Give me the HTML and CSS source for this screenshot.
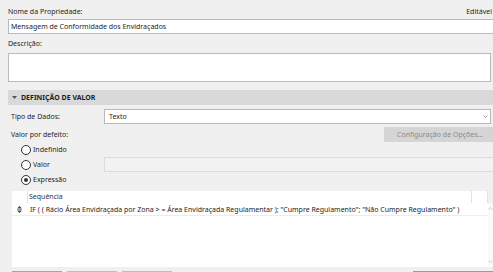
FILE: index.html
```html
<!DOCTYPE html>
<html lang="pt">
<head>
    <meta charset="UTF-8">
    <meta name="viewport" content="width=device-width, initial-scale=1.0">
    <title>Propriedade</title>
    <link rel="stylesheet" href="styles.css">
</head>
<body>
    <div class="panel">
        <div class="top-row">
            <span>Nome da Propriedade:</span>
            <span class="editable">Editável</span>
        </div>
        <div class="field name-field">Mensagem de Conformidade dos Envidraçados</div>
        <div class="desc-label">Descrição:</div>
        <div class="field desc-field"></div>

        <div class="section-bar">
            <svg class="caret" width="5" height="3" viewBox="0 0 5 3"><path d="M0 0H5L2.5 3Z" fill="#555"/></svg>
            DEFINIÇÃO DE VALOR
        </div>

        <div class="row type-row">
            <span class="row-label">Tipo de Dados:</span>
            <div class="field select">
                <span>Texto</span>
                <svg class="chevron" width="5" height="3" viewBox="0 0 5 3"><path d="M0.5 0.5L2.5 2.5L4.5 0.5" stroke="#999" fill="none"/></svg>
            </div>
        </div>
        <div class="row default-row">
            <span class="row-label">Valor por defeito:</span>
            <div class="options-btn">Configuração de Opções...</div>
        </div>

        <div class="radios">
            <div class="radio-row"><span class="radio-label"><span class="radio"></span>Indefinido</span></div>
            <div class="radio-row"><span class="radio-label"><span class="radio"></span>Valor</span><div class="value-field"></div></div>
            <div class="radio-row"><span class="radio-label"><span class="radio checked"></span>Expressão</span></div>
        </div>

        <div class="sequence">
            <div class="seq-head">
                <span class="handle-col"></span>
                <span class="seq-title">Sequência</span>
                <span class="head-cell"></span>
            </div>
            <div class="seq-body">
                <div class="seq-rows">
                    <div class="seq-row">
                        <span class="handle">
                            <svg width="5" height="7" viewBox="0 0 5 7"><path d="M2.5 0L5 2.5H0Z M0 3.2H5V3.8H0Z M0 4.5H5L2.5 7Z" fill="#444"/></svg>
                        </span>
                        <span class="expr">IF ( ( Rácio Área Envidraçada por Zona &gt; = Área Envidraçada Regulamentar ); "Cumpre Regulamento"; "Não Cumpre Regulamento" )</span>
                    </div>
                </div>
                <div class="scrollbar">
                    <svg width="5" height="3" viewBox="0 0 5 3"><path d="M0.5 2.5L2.5 0.5L4.5 2.5" stroke="#c8c8c8" fill="none"/></svg>
                    <svg width="5" height="3" viewBox="0 0 5 3"><path d="M0.5 0.5L2.5 2.5L4.5 0.5" stroke="#c8c8c8" fill="none"/></svg>
                </div>
            </div>
        </div>

        <div class="footer-buttons">
            <span class="foot-btn first"></span>
            <span class="foot-btn"></span>
            <span class="foot-btn"></span>
            <span class="foot-btn last"></span>
        </div>
    </div>
</body>
</html>
```

FILE: styles.css
```css
body {
    margin: 0;
    width: 493px;
    height: 272px;
    overflow: hidden;
    background-color: #f0f0f0;
    color: #1e1e1e;
    font-family: "Noto Sans", sans-serif;
    font-size: 7px;
}
.panel {
    padding: 6px 0 0 8px;
}
.top-row {
    display: flex;
    height: 12px;
    line-height: 12px;
    white-space: nowrap;
}
.editable {
    margin-left: auto;
    margin-right: 1px;
}
.field {
    background-color: #fff;
    border: 1px solid #b9b9b9;
    box-sizing: border-box;
}
.name-field {
    margin-top: 1px;
    height: 15px;
    line-height: 13px;
    padding-left: 2px;
    border-right: none;
}
.desc-label {
    margin-top: 4px;
    line-height: 12px;
}
.desc-field {
    margin-top: 3px;
    margin-right: 2px;
    height: 29px;
}
.section-bar {
    margin-top: 8px;
    height: 15px;
    display: flex;
    align-items: center;
    padding-left: 4px;
    background-color: #d9d9d9;
    font-weight: bold;
}
.caret {
    margin-right: 4px;
}
.row {
    display: flex;
    align-items: center;
    padding-left: 3px;
}
.row-label {
    width: 93px;
    flex-shrink: 0;
}
.type-row {
    margin-top: 4px;
}
.select {
    flex: 1;
    height: 15px;
    margin-right: 2px;
    display: flex;
    align-items: center;
    justify-content: space-between;
    padding: 0 2px 0 4px;
}
.default-row {
    margin-top: 3px;
}
.options-btn {
    margin-left: auto;
    margin-right: -6px;
    width: 115px;
    height: 15px;
    line-height: 15px;
    padding-left: 13px;
    box-sizing: border-box;
    background-color: #d5d5d5;
    color: #8a8a8a;
    white-space: nowrap;
}
.radio-row {
    display: grid;
    grid-template-columns: 83px 1fr;
    align-items: center;
    height: 15px;
    padding-left: 13px;
}
.radio-label {
    display: flex;
    align-items: center;
}
.radio {
    width: 10px;
    height: 10px;
    box-sizing: border-box;
    border: 1px solid #333;
    border-radius: 50%;
    background-color: #fff;
    margin-right: 2px;
    display: flex;
    align-items: center;
    justify-content: center;
}
.radio.checked::after {
    content: "";
    width: 4px;
    height: 4px;
    border-radius: 50%;
    background-color: #333;
}
.value-field {
    height: 15px;
    box-sizing: border-box;
    border: 1px solid #dcdcdc;
    border-right: none;
    background-color: #f2f2f2;
}
.sequence {
    margin-top: 4px;
    margin-left: 4px;
    height: 76px;
    display: flex;
    flex-direction: column;
}
.seq-head {
    display: flex;
    height: 12px;
    margin-right: 5px;
    background-color: #fff;
    color: #333;
    line-height: 12px;
}
.handle-col {
    width: 15px;
    border-right: 1px solid #dedede;
}
.seq-title {
    flex: 1;
    padding-left: 1px;
}
.head-cell {
    width: 15px;
    border-left: 1px solid #e2e2e2;
    border-right: 1px solid #e2e2e2;
}
.seq-body {
    flex: 1;
    display: flex;
    background-color: #fff;
}
.seq-rows {
    flex: 1;
}
.seq-row {
    display: flex;
    align-items: center;
    height: 12px;
    border-bottom: 1px solid #ececec;
    white-space: nowrap;
}
.handle {
    width: 16px;
    display: flex;
    justify-content: center;
    padding-right: 1px;
    box-sizing: border-box;
}
.expr {
    padding-left: 2px;
}
.scrollbar {
    width: 5px;
    background-color: #fafafa;
    display: flex;
    flex-direction: column;
    justify-content: space-between;
    padding: 4px 0;
}
.footer-buttons {
    margin-top: 4px;
    margin-left: 4px;
    display: flex;
    gap: 5px;
}
.foot-btn {
    width: 50px;
    height: 12px;
    border-top: 2px solid #bdbdbd;
    background-color: #e6e6e6;
}
.foot-btn.first {
    border-top-color: #a4a4a4;
}
.foot-btn.last {
    margin-left: auto;
    width: 80px;
    border-top-color: #9a9a9a;
}
```
